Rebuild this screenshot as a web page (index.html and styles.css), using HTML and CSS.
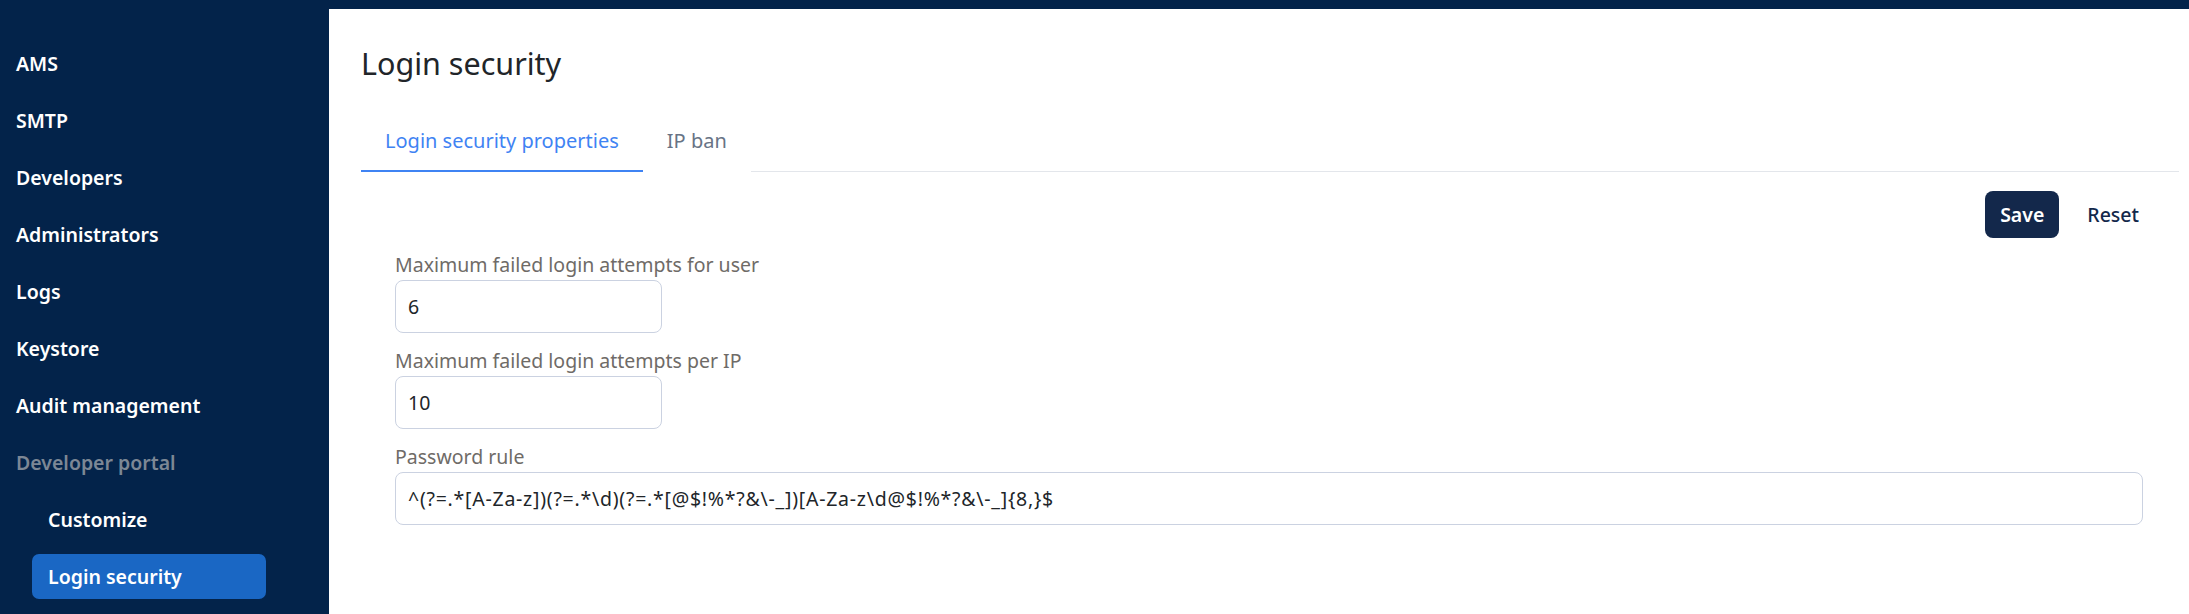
FILE: index.html
```html
<!DOCTYPE html>
<html lang="en">
<head>
    <meta charset="UTF-8">
    <meta name="viewport" content="width=device-width, initial-scale=1.0">
    <title>Login security</title>

    <link rel="stylesheet" href="styles.css">
</head>
<body>
    <aside class="menu">
        <a class="menu-item">AMS</a>
        <a class="menu-item">SMTP</a>
        <a class="menu-item">Developers</a>
        <a class="menu-item">Administrators</a>
        <a class="menu-item">Logs</a>
        <a class="menu-item">Keystore</a>
        <a class="menu-item">Audit management</a>
        <span class="menu-item menu-grupo">Developer portal</span>
        <a class="menu-item menu-sub">Customize</a>
        <a class="menu-item menu-sub activo">Login security</a>
    </aside>

    <main class="contenido">
        <h1 class="titulo">Login security</h1>

        <!-- Pestañas -->
        <div class="pestanas">
            <button class="pestana activa">Login security properties</button>
            <button class="pestana">IP ban</button>
        </div>

        <div class="acciones">
            <button class="boton-guardar">Save</button>
            <button class="boton-reset">Reset</button>
        </div>

        <form class="formulario">
            <div class="campo">
                <label class="etiqueta" for="max-user">Maximum failed login attempts for user</label>
                <input class="entrada corta" id="max-user" type="text" value="6">
            </div>
            <div class="campo">
                <label class="etiqueta" for="max-ip">Maximum failed login attempts per IP</label>
                <input class="entrada corta" id="max-ip" type="text" value="10">
            </div>
            <div class="campo">
                <label class="etiqueta" for="regla">Password rule</label>
                <input class="entrada regla" id="regla" type="text" value="^(?=.*[A-Za-z])(?=.*\d)(?=.*[@$!%*?&amp;\-_])[A-Za-z\d@$!%*?&amp;\-_]{8,}$">
            </div>
        </form>
    </main>
</body>
</html>
```

FILE: styles.css
```css
body {
    display: grid;
    grid-template-columns: 329px 1fr;
    height: 100vh;
    margin: 0;
    background-color: #03234a;
    font-family: "Noto Sans", "Open Sans", sans-serif;
    overflow: hidden;
}

.menu {
    display: flex;
    flex-direction: column;
    gap: 12px;
    padding-top: 41px;
}

.menu-item {
    display: flex;
    align-items: center;
    height: 45px;
    padding-left: 16px;
    font-size: 19.5px;
    font-weight: 600;
    color: #ffffff;
    cursor: pointer;
}

.menu-grupo {
    color: #7c8795;
    cursor: default;
}

.menu-sub {
    width: 218px;
    margin-left: 32px;
    border-radius: 7px;
}

.activo {
    background-color: #1a67c4;
}

.contenido {
    margin-top: 9px;
    padding: 33px 10px 0 32px;
    background-color: #ffffff;
}

.titulo {
    margin: 0 0 31px 0;
    font-size: 30.5px;
    line-height: 42px;
    font-weight: 400;
    color: #212529;
}

.pestanas {
    display: flex;
    border-bottom: 1px solid #e3e6eb;
}

.pestana {
    margin-bottom: -1px;
    padding: 12px 24px 15px 24px;
    border: none;
    border-bottom: 2px solid #ffffff;
    background: none;
    font-family: inherit;
    font-size: 20px;
    line-height: 28px;
    color: #687385;
    cursor: pointer;
}

.pestana.activa {
    color: #3f83f3;
    border-bottom-color: #3f83f3;
}

.acciones {
    display: flex;
    justify-content: flex-end;
    gap: 13px;
    margin-top: 19px;
    padding-right: 25px;
}

.boton-guardar, .boton-reset {
    padding: 10px 15px;
    border: none;
    border-radius: 8px;
    font-family: inherit;
    font-size: 19.5px;
    line-height: 27px;
    cursor: pointer;
}

.boton-guardar {
    background-color: #13284b;
    color: #ffffff;
    font-weight: 600;
}

.boton-reset {
    background: none;
    color: #13284b;
    font-weight: 500;
}

.formulario {
    margin-top: 12px;
    padding: 0 36px 0 34px;
}

.campo {
    display: flex;
    flex-direction: column;
    margin-bottom: 13px;
}

.etiqueta {
    font-size: 19.5px;
    line-height: 30px;
    color: #6f6b67;
}

.entrada {
    box-sizing: border-box;
    height: 53px;
    padding: 0 12px;
    border: 1px solid #cbd2e1;
    border-radius: 8px;
    font-family: inherit;
    font-size: 19.5px;
    color: #212529;
}

.entrada.corta {
    width: 267px;
}

.entrada.regla {
    letter-spacing: 0.75px;
}
```
